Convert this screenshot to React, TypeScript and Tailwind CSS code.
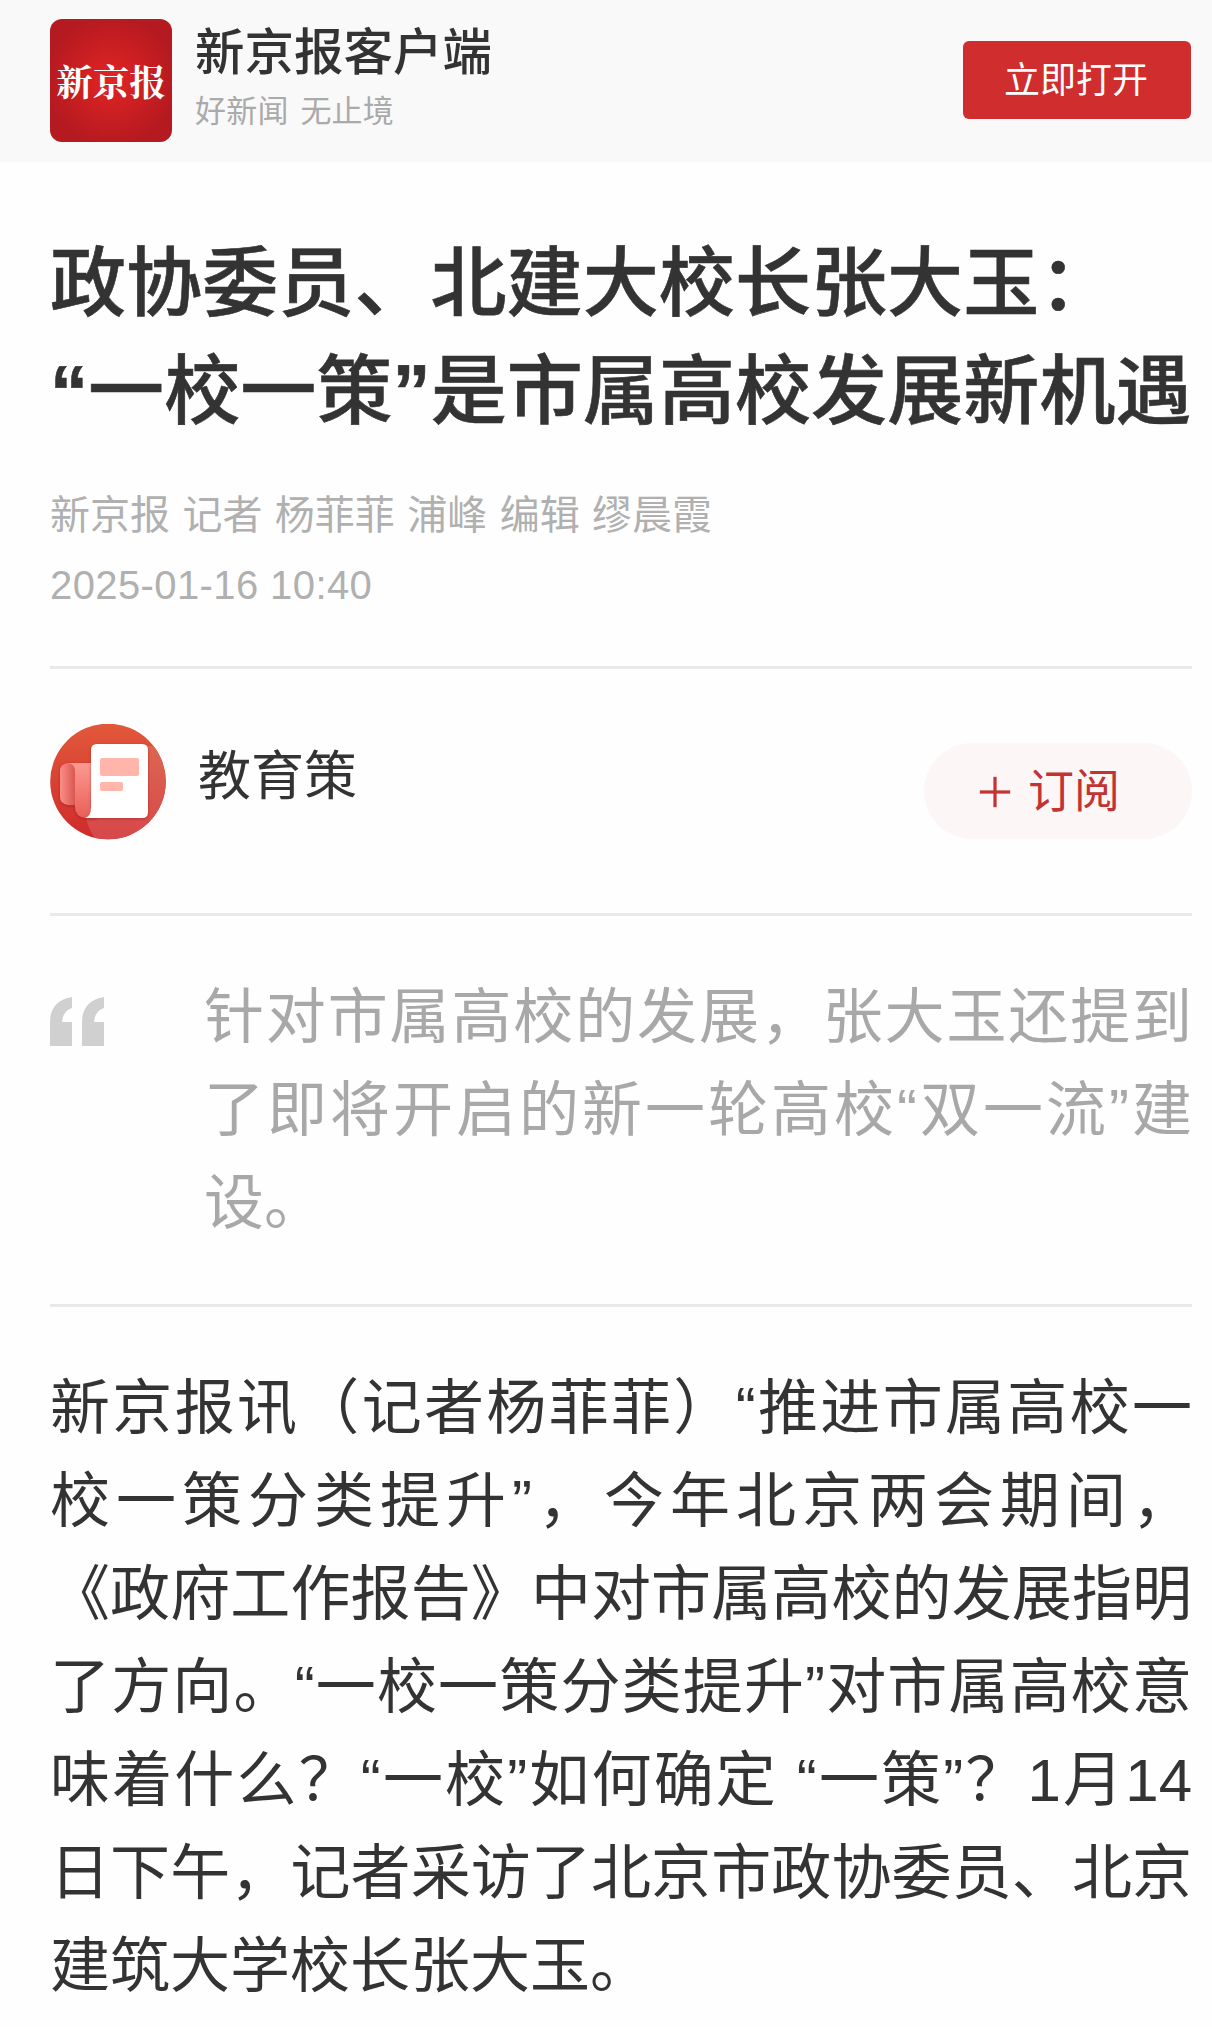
import { Plus } from 'lucide-react';

const articleLines = [
  '新京报讯（记者杨菲菲）“推进市属高校一',
  '校一策分类提升”，今年北京两会期间，',
  '《政府工作报告》中对市属高校的发展指明',
  '了方向。“一校一策分类提升”对市属高校意',
  '味着什么？“一校”如何确定 “一策”？1月14',
  '日下午，记者采访了北京市政协委员、北京',
  '建筑大学校长张大玉。',
];

const summaryLines = [
  '针对市属高校的发展，张大玉还提到',
  '了即将开启的新一轮高校“双一流”建',
  '设。',
];

function JustifiedText({ lines }: { lines: string[] }) {
  return (
    <>
      {lines.map((line, index) => (
        <span
          key={index}
          className={
            index < lines.length - 1
              ? 'block whitespace-nowrap text-justify [text-align-last:justify]'
              : 'block whitespace-nowrap'
          }
        >
          {line}
        </span>
      ))}
    </>
  );
}

function NewspaperIcon() {
  return (
    <svg viewBox="0 0 116 116" className="w-[116px] h-[116px] shrink-0" aria-hidden="true">
      <defs>
        <linearGradient id="disc" x1="0" y1="0" x2="0" y2="1">
          <stop offset="0" stopColor="#e2583a" />
          <stop offset="1" stopColor="#ce2b2b" />
        </linearGradient>
        <linearGradient id="shade" x1="0" y1="0" x2="0" y2="1">
          <stop offset="0" stopColor="#dd6650" />
          <stop offset="1" stopColor="#d6474b" />
        </linearGradient>
        <linearGradient id="rollBack" x1="0" y1="0" x2="1" y2="0">
          <stop offset="0" stopColor="#fb8e86" />
          <stop offset="1" stopColor="#cf4440" />
        </linearGradient>
        <linearGradient id="rollFront" x1="0" y1="0" x2="0" y2="1">
          <stop offset="0" stopColor="#fd9a91" />
          <stop offset="1" stopColor="#e85f57" />
        </linearGradient>
        <filter id="soft" x="-20%" y="-20%" width="140%" height="140%">
          <feDropShadow dx="0" dy="1" stdDeviation="1.5" floodColor="#8f1a1a" floodOpacity="0.45" />
        </filter>
        <clipPath id="round">
          <circle cx="58" cy="57.5" r="57.8" />
        </clipPath>
      </defs>
      <g clipPath="url(#round)">
        <rect width="116" height="116" fill="url(#disc)" />
        <path d="M96 22 H106 L116 40 V116 H46 Q37 103 36 92 Z" fill="url(#shade)" />
        <g filter="url(#soft)">
          <path d="M18 39 H30 V81 H18 Q10 80 10 72 V47 Q10 40 18 39 Z" fill="url(#rollBack)" />
          <path d="M18 39 H46 V94 H36 Q25 93 25 83 V47 Q25 40 18 39 Z" fill="url(#rollFront)" />
        </g>
        <path
          d="M47 20 H92 Q98 20 98 26 V88 Q98 94 92 94 H35 Q41 92 41 84 V26 Q41 20 47 20 Z"
          fill="#fff"
          filter="url(#soft)"
        />
        <rect x="50" y="34" width="39" height="18" rx="2" fill="#ffb5aa" />
        <rect x="50" y="58" width="23" height="9" rx="2" fill="#ffb5aa" />
      </g>
    </svg>
  );
}

function QuoteMark() {
  return (
    <svg viewBox="0 0 54 49" className="w-[54px] h-[49px] mt-[37px] shrink-0" fill="#d0d0d0" aria-hidden="true">
      <path d="M0 49 V25 C0 11 8 2 22 0 V11 Q13 14 12 25 H22 V49 Z" />
      <path d="M32 49 V25 C32 11 40 2 54 0 V11 Q45 14 44 25 H54 V49 Z" />
    </svg>
  );
}

export default function App() {
  return (
    <div className="w-full h-[2027px] overflow-hidden bg-[#fefefe] text-[#333] [font-family:'Liberation_Sans','Noto_Sans_CJK_SC',sans-serif] [text-spacing-trim:space-all] [text-autospace:no-autospace]">
      {/* App banner */}
      <header className="h-[162px] bg-[#f9f9f9] pl-[50px] pr-[21px] flex items-center">
        <div className="w-[122px] h-[123px] -mt-[2px] rounded-xl flex items-center justify-center bg-[radial-gradient(circle,#e32424_0%,#b51a20_75%)] shrink-0">
          <span className="text-white text-[36.5px] leading-none font-bold [font-family:'Noto_Serif_CJK_SC','Noto_Sans_CJK_SC',serif]">
            新京报
          </span>
        </div>
        <div className="ml-[23px] flex-1">
          <p className="text-[49.5px] leading-[62px] font-medium">新京报客户端</p>
          <p className="text-[31px] leading-[56px] text-[#aaa] tracking-[0.2px] [word-spacing:3px]">好新闻 无止境</p>
        </div>
        <button className="w-[228px] h-[78px] -mt-[2px] pt-0.5 pr-0.5 rounded-md bg-[#cf2d2e] text-white text-[36px] leading-none">
          立即打开
        </button>
      </header>

      <main className="pl-[50px] pr-5">
        {/* Headline */}
        <h1 className="pt-[68px] text-[76px] leading-[108px] font-medium whitespace-nowrap tracking-[0.1px] [-webkit-text-stroke:0.6px_#333]">
          政协委员、北建大校长张大玉：
          <br />
          <span className="font-bold">“</span>一校一策<span className="font-bold">”</span>是市属高校发展新机遇
        </h1>
        <div className="mt-[34px] pb-[46px] text-[40px] leading-[70px] text-[#b0b0b0] border-b-3 border-[#e9e9e9]">
          <p className="[word-spacing:1.3px]">新京报 记者 杨菲菲 浦峰 编辑 缪晨霞</p>
          <p className="tracking-[0.4px]">2025-01-16 10:40</p>
        </div>

        {/* Channel */}
        <section className="h-[247px] pt-[55px] flex items-start border-b-3 border-[#e9e9e9]">
          <NewspaperIcon />
          <h2 className="ml-8 flex-1 text-[53px] leading-[106px]">教育策</h2>
          <button className="mt-[19px] w-[268px] h-24 pl-[45px] rounded-full bg-[#fdf6f6] text-[#c23434] flex items-center text-[46px] leading-none">
            <Plus className="w-[52px] h-[52px] mt-0.5 mr-[7px]" strokeWidth={1.5} strokeLinecap="butt" />
            <span>订阅</span>
          </button>
        </section>

        {/* Summary */}
        <section className="h-[391px] pt-[44px] flex items-start border-b-3 border-[#e9e9e9]">
          <QuoteMark />
          <p className="ml-[100px] mt-[11px] flex-1 text-[60px] leading-[93px] text-[#a8a8a8]">
            <JustifiedText lines={summaryLines} />
          </p>
        </section>

        <p className="pt-[55px] text-[60px] leading-[93px]">
          <JustifiedText lines={articleLines} />
        </p>
      </main>
    </div>
  );
}
